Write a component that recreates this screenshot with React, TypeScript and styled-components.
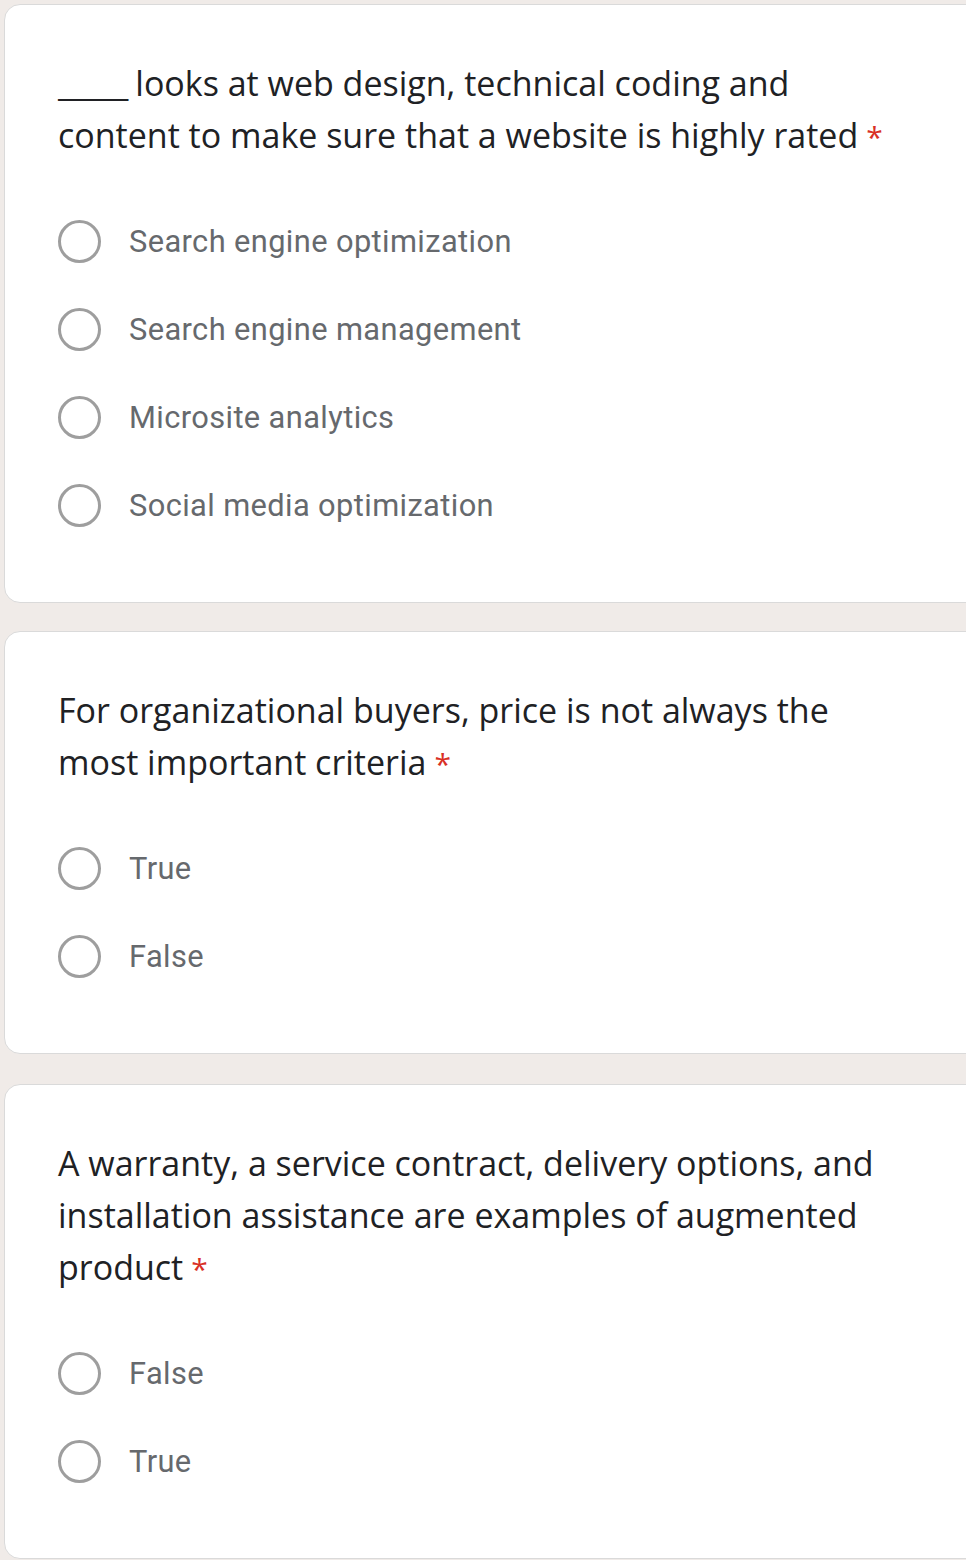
import styled, { createGlobalStyle } from "styled-components";

const GlobalStyle = createGlobalStyle`
  html, body {
    margin: 0;
    padding: 0;
    background: #f0ebe8;
    overflow: hidden;
  }
`;

const Page = styled.div`
  display: flex;
  flex-direction: column;
  gap: 28px;
  padding: 4px 0 0 4px;
  width: 1000px;
`;

const Card = styled.div<{ $gapAfter?: number }>`
  background: #fff;
  border: 1px solid #dadada;
  border-radius: 16px;
  padding: 52px 0 53px 53px;
  margin-bottom: ${({ $gapAfter }) => ($gapAfter ? `${$gapAfter - 28}px` : "0")};
`;

const Title = styled.div`
  font-family: "Open Sans", "Liberation Sans", sans-serif;
  font-size: 34px;
  line-height: 52px;
  height: auto;
  color: #202124;
  max-width: 842px;
`;

const Blank = styled.span`
  letter-spacing: -1px;
`;

const Required = styled.span`
  color: #d93025;
  margin-left: 8px;
  font-size: 30px;
  line-height: 1;
`;

const Options = styled.div`
  display: flex;
  flex-direction: column;
  margin-top: 36px;
`;

const Option = styled.label`
  display: flex;
  align-items: center;
  height: 88px;
  gap: 28px;
  font-family: Roboto, "Liberation Sans", sans-serif;
  font-size: 30.8px;
  color: #66696d;
  letter-spacing: 0.4px;
`;

const Radio = styled.span`
  width: 37px;
  height: 37px;
  border: 3px solid #9e9e9e;
  border-radius: 50%;
  flex-shrink: 0;
`;

const questions = [
  {
    blank: true,
    title: "looks at web design, technical coding and content to make sure that a website is highly rated",
    options: [
      "Search engine optimization",
      "Search engine management",
      "Microsite analytics",
      "Social media optimization",
    ],
  },
  {
    title: "For organizational buyers, price is not always the most important criteria",
    options: ["True", "False"],
  },
  {
    title:
      "A warranty, a service contract, delivery options, and installation assistance are examples of augmented product",
    options: ["False", "True"],
  },
];

const App = () => (
  <>
    <GlobalStyle />
    <Page>
      {questions.map((q, i) => (
        <Card key={i} $gapAfter={i === 1 ? 30 : undefined}>
          <Title>
            {q.blank && <Blank>_____ </Blank>}
            {q.title}
            <Required>*</Required>
          </Title>
          <Options>
            {q.options.map((o) => (
              <Option key={o}>
                <Radio />
                {o}
              </Option>
            ))}
          </Options>
        </Card>
      ))}
    </Page>
  </>
);

export default App;
